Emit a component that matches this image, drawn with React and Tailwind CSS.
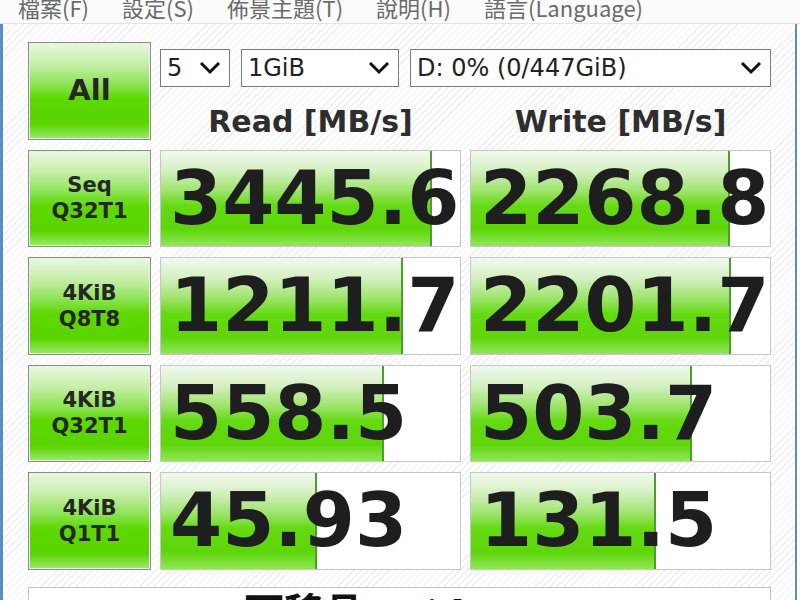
import React from 'react';

const rows = [
  { top: 'Seq', bottom: 'Q32T1', read: '3445.6', readFill: 271, write: '2268.8', writeFill: 259 },
  { top: '4KiB', bottom: 'Q8T8', read: '1211.7', readFill: 242, write: '2201.7', writeFill: 260 },
  { top: '4KiB', bottom: 'Q32T1', read: '558.5', readFill: 223, write: '503.7', writeFill: 221 },
  { top: '4KiB', bottom: 'Q1T1', read: '45.93', readFill: 156, write: '131.5', writeFill: 185 },
];

const menu = ['檔案(F)', '設定(S)', '佈景主題(T)', '說明(H)', '語言(Language)'];

const Chevron = () => (
  <svg width="22" height="14" viewBox="0 0 22 14" className="shrink-0">
    <path d="M2 2 L11 11 L20 2" fill="none" stroke="#111" strokeWidth="3" />
  </svg>
);

const Combo = ({ value, width }) => (
  <div
    className="flex h-[38px] items-center justify-between border border-[#7a7a7a] bg-white pl-[6px] pr-[8px] text-[24px] text-[#222]"
    style={{ width }}
  >
    <span className="leading-none">{value}</span>
    <Chevron />
  </div>
);

const GreenButton = ({ children, className = '' }) => (
  <div
    className={`flex h-full flex-col items-center justify-center border border-[#8c8c8c] bg-[linear-gradient(to_bottom,#eaf7e2_0%,#c6eea8_22%,#8fe45a_42%,#5ed800_58%,#5ad400_84%,#9bea6c_100%)] font-bold text-[#262626] shadow-[inset_0_0_0_1px_#e6f4dc] ${className}`}
  >
    {children}
  </div>
);

const Meter = ({ value, fill }) => (
  <div className="relative h-full overflow-hidden border border-[#c6c6c6] bg-white">
    <div
      className="absolute inset-y-0 left-0 border-r-2 border-[#4a9f2a] bg-[linear-gradient(to_bottom,#f2f8ee_0%,#d6f0c4_20%,#9ee46c_42%,#64da12_58%,#5ed60a_82%,#90e658_100%)]"
      style={{ width: fill }}
    />
    <div className="relative flex h-full items-center pl-[9px] text-[75px] font-bold leading-none text-[#1e1e1e]">
      {value}
    </div>
  </div>
);

export default function App() {
  return (
    <div
      className="h-[600px] w-[800px] overflow-hidden bg-white"
      style={{ fontFamily: '"DejaVu Sans", "Noto Sans CJK TC", sans-serif' }}
    >
      <div className="flex h-[24px] items-start gap-[33px] border-b border-[#e4e4e4] bg-[#fbfbfb] pl-[18px] text-[22px] text-[#6a6a6a]">
        {menu.map((m) => (
          <span key={m} className="-mt-[6px] leading-[26px]" style={{ fontFamily: '"Noto Sans CJK TC", "Liberation Sans", sans-serif' }}>
            {m}
          </span>
        ))}
      </div>

      <div className="mr-[3px] flex h-[576px] border-l-[3px] border-r-[2px] border-[#5a8cc6] bg-[repeating-linear-gradient(135deg,#ffffff_0px,#ffffff_4px,#eeeeee_4px,#eeeeee_5px)]">
        <div className="flex flex-col pl-[25px] pt-[18px]">
          <div className="grid grid-cols-[123px_301px_301px] auto-rows-[97.5px] gap-x-[9px] gap-y-[10px]">
            <GreenButton className="text-[29px]">All</GreenButton>
            <div className="col-span-2 flex flex-col">
              <div className="mt-[7px] flex gap-[11px]">
                <Combo value="5" width={70} />
                <Combo value="1GiB" width={158} />
                <Combo value="D: 0% (0/447GiB)" width={361} />
              </div>
              <div className="mt-[20px] grid grid-cols-[301px_301px] gap-x-[9px] text-[30px] font-bold leading-none text-[#2e2e2e]">
                <div className="text-center">Read [MB/s]</div>
                <div className="text-center">Write [MB/s]</div>
              </div>
            </div>

            {rows.map((r, i) => (
              <React.Fragment key={i}>
                <GreenButton className="text-[21px] leading-[26px]">
                  <span>{r.top}</span>
                  <span>{r.bottom}</span>
                </GreenButton>
                <Meter value={r.read} fill={r.readFill} />
                <Meter value={r.write} fill={r.writeFill} />
              </React.Fragment>
            ))}
          </div>

          <div className="mt-[17px] flex h-[60px] w-[743px] justify-center border border-[#c4c4c4] bg-white pt-[6px]">
            <span
              className="pr-[80px] text-[40px] font-bold leading-none text-[#111]"
              style={{ fontFamily: '"Liberation Serif", "Noto Sans CJK TC", serif' }}
            >
              可移品 - Disk
            </span>
          </div>
        </div>
      </div>
    </div>
  );
}
